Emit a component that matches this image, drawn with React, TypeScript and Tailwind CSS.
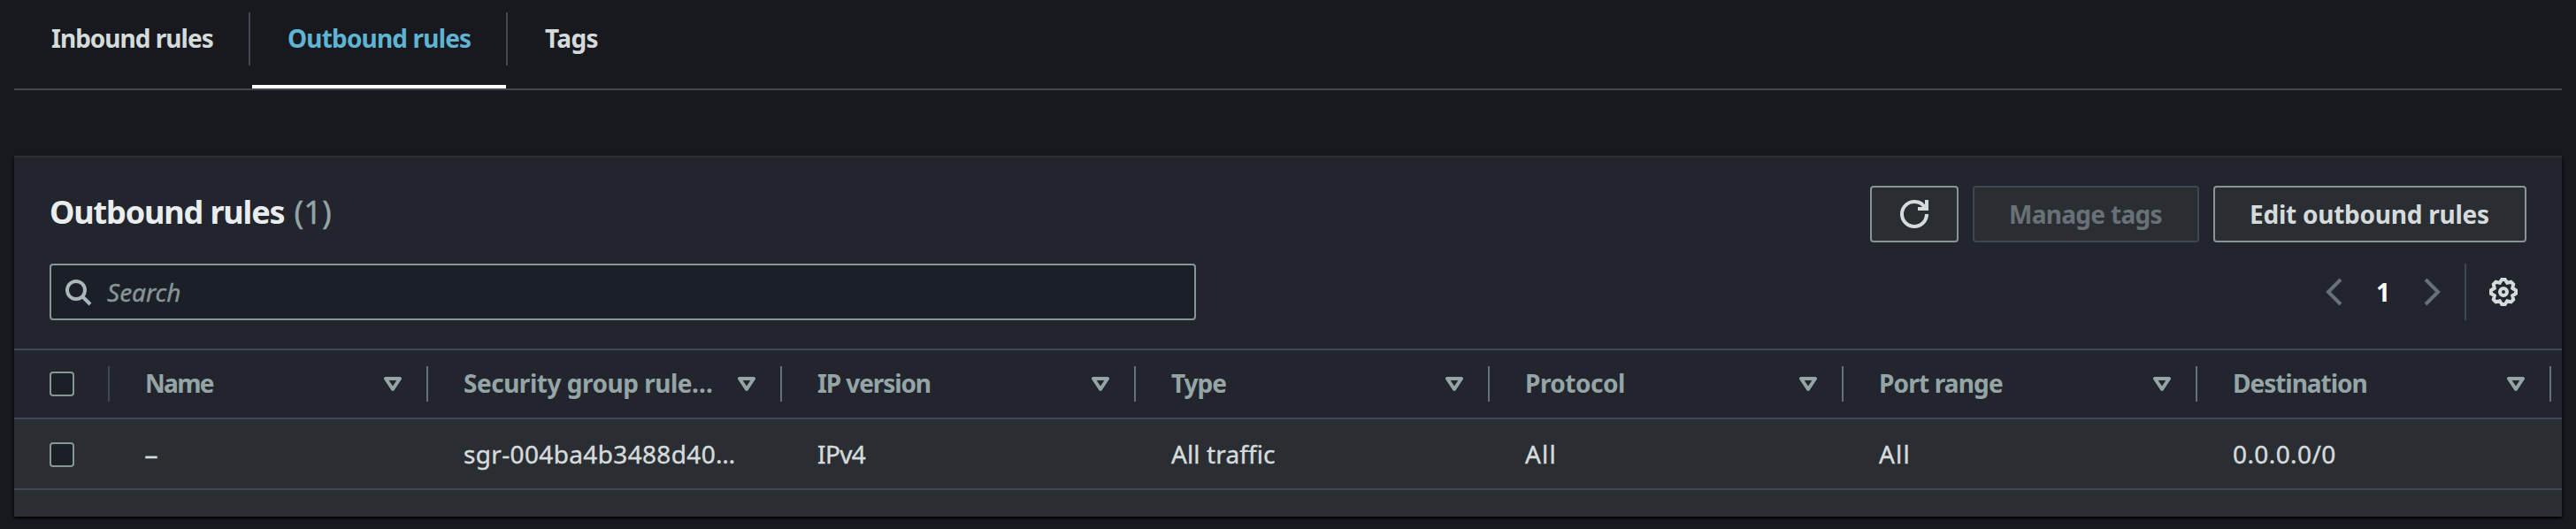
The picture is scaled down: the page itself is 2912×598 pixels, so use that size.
import React from "react";

type Column = {
  label: string;
  value: string;
  width: string;
  labelClass: string;
  valueClass: string;
};

const columns: Column[] = [
  { label: "Name", value: "–", width: "w-[360px]", labelClass: "tracking-[-1.7px]", valueClass: "tracking-normal scale-x-110" },
  { label: "Security group rule…", value: "sgr-004ba4b3488d40…", width: "w-[400px]", labelClass: "tracking-[-0.48px]", valueClass: "tracking-[0.35px]" },
  { label: "IP version", value: "IPv4", width: "w-[400px]", labelClass: "tracking-[-1.1px]", valueClass: "tracking-[-0.6px]" },
  { label: "Type", value: "All traffic", width: "w-[400px]", labelClass: "tracking-[-1.05px]", valueClass: "tracking-[0.11px]" },
  { label: "Protocol", value: "All", width: "w-[400px]", labelClass: "tracking-[-0.49px]", valueClass: "tracking-[1.2px]" },
  { label: "Port range", value: "All", width: "w-[400px]", labelClass: "tracking-[-0.83px]", valueClass: "tracking-[1.2px]" },
  { label: "Destination", value: "0.0.0.0/0", width: "w-[400px]", labelClass: "tracking-[-1.03px]", valueClass: "tracking-[0.4px]" },
];

function Icon({ className = "", children }: { className?: string; children: React.ReactNode }) {
  return (
    <svg
      viewBox="0 0 16 16"
      width="32"
      height="32"
      fill="none"
      stroke="currentColor"
      strokeWidth="2"
      className={`block shrink-0 ${className}`}
      aria-hidden="true"
    >
      {children}
    </svg>
  );
}

function Checkbox() {
  return (
    <span
      role="checkbox"
      aria-checked="false"
      className="block size-7 shrink-0 rounded-[4px] border-2 border-[#879596] bg-[#1b1f27]"
    />
  );
}

function Tabs() {
  return (
    <nav className="mx-4 flex h-[102px] shrink-0 border-b-2 border-[#414750] font-bold leading-10 text-[#d5dbdb]">
      <div className="flex w-[267px] pt-[14px]">
        <div className="flex h-[60px] w-full border-r-2 border-[#414750] pl-[42px] pt-[9px]">
          <span className="whitespace-nowrap tracking-[-0.98px]">Inbound rules</span>
        </div>
      </div>
      <div className="flex w-[291px] flex-col justify-between pt-[14px]">
        <div className="flex h-[60px] w-full border-r-2 border-[#414750] pl-[42px] pt-[9px] text-[#5fb4d4]">
          <span className="whitespace-nowrap tracking-[-0.83px]">Outbound rules</span>
        </div>
        <div className="ml-[2px] mr-[2px] h-1 bg-white" />
      </div>
      <div className="pl-[42px] pt-[23px]">
        <span className="tracking-[-0.63px]">Tags</span>
      </div>
    </nav>
  );
}

function PanelHeader() {
  return (
    <header className="flex h-[216px] shrink-0 flex-col px-10 pt-8">
      <div className="flex h-16 justify-between">
        <h2 className="pt-[5px] text-[36px] font-bold leading-[50px] text-[#eaeded]">
          <span className="tracking-[-1.14px]">Outbound rules</span>
          <span className="ml-[11px] font-normal text-[#95a5a6] [-webkit-text-stroke:0.4px]">(1)</span>
        </h2>
        <div className="flex gap-4 font-bold text-[#d5dbdb]">
          <button aria-label="Refresh" className="flex w-[100px] items-center justify-center rounded-[4px] border-2 border-[#879596] bg-[#2a2e33]">
            <Icon>
              <path d="M10 5h5V0" />
              <path d="M15 8a6.957 6.957 0 0 1-7 7 6.957 6.957 0 0 1-7-7 6.957 6.957 0 0 1 7-7 6.87 6.87 0 0 1 6.3 4" />
            </Icon>
          </button>
          <button className="flex w-64 items-center whitespace-nowrap rounded-[4px] border-2 border-[#414750] bg-[#2a2e33] pb-px pl-[39px] tracking-[-0.7px] text-[#687078]">
            Manage tags
          </button>
          <button className="flex w-[354px] items-center whitespace-nowrap rounded-[4px] border-2 border-[#879596] bg-[#2a2e33] pb-px pl-[39px] tracking-[-0.24px]">
            Edit outbound rules
          </button>
        </div>
      </div>
      <div className="mt-6 flex h-16 justify-between">
        <div className="flex w-[1296px] items-center rounded-[4px] border-2 border-[#879596] bg-[#1b1f27] pl-[14px]">
          <Icon className="text-[#aab7b8]">
            <circle cx="7" cy="7" r="5" />
            <path d="m15 15-4.5-4.5" />
          </Icon>
          <span className="ml-[17px] italic text-[#879596] [-webkit-text-stroke:0.4px]">Search</span>
        </div>
        <div className="flex items-center">
          <Icon className="text-[#687078]">
            <path d="M11 1 4 8l7 7" />
          </Icon>
          <span className="w-[76px] pb-px text-center font-bold text-white">1</span>
          <Icon className="text-[#687078]">
            <path d="m5 1 7 7-7 7" />
          </Icon>
          <div className="ml-[22px] h-16 w-[2px] bg-[#414750]" />
          <Icon className="ml-[26px] mr-[10px] text-[#d5dbdb]">
            <circle cx="8" cy="8" r="2" />
            <path d="M7.1 1h1.8l1.2 1.9 2.2-.5 1.3 1.3-.5 2.2L15 7.1v1.8l-1.9 1.2.5 2.2-1.3 1.3-2.2-.5L8.9 15H7.1l-1.2-1.9-2.200.5-1.300-1.300.5-2.200L1 8.900V7.100l1.900-1.200-.5-2.200 1.300-1.300 2.200.5z" />
          </Icon>
        </div>
      </div>
    </header>
  );
}

function RulesTable() {
  return (
    <div className="flex flex-1 flex-col leading-10">
      <div className="flex h-20 shrink-0 items-center border-y-2 border-[#414750] font-bold text-[#95a5a6]">
        <div className="flex h-10 w-[108px] items-center justify-between border-r-2 border-[#414750] pl-10">
          <Checkbox />
        </div>
        {columns.map((c) => (
          <div key={c.label} className={`flex h-10 shrink-0 items-center justify-between border-r-2 border-[#687078] pl-10 pr-[22px] ${c.width}`}>
            <span className={`whitespace-nowrap pb-[2px] ${c.labelClass}`}>{c.label}</span>
            <Icon>
              <path d="M4 5h8l-4 6z" strokeLinejoin="round" />
            </Icon>
          </div>
        ))}
      </div>
      <div className="flex h-20 shrink-0 items-center border-b-2 border-[#414750] bg-[#2a2e33] text-[#d5dbdb]">
        <div className="flex w-[108px] items-center pl-10 pt-[2px]">
          <Checkbox />
        </div>
        {columns.map((c) => (
          <div key={c.label} className={`flex shrink-0 pl-10 [-webkit-text-stroke:0.4px] ${c.width}`}>
            <span className={`whitespace-nowrap ${c.valueClass}`}>{c.value}</span>
          </div>
        ))}
      </div>
      <div className="flex-1 bg-[#2a2e33]" />
    </div>
  );
}

export default function App() {
  return (
    <main className="flex h-[598px] w-[2912px] flex-col overflow-hidden bg-[#18191e] font-['Noto_Sans','Open_Sans',sans-serif] text-[28px]">
      <Tabs />
      <section className="mx-4 mt-[74px] flex h-[408px] shrink-0 flex-col border-t-2 border-[#2a2e33] bg-[#22252d] shadow-[0_2px_2px_0_rgba(0,0,0,0.6),2px_2px_2px_0_rgba(0,0,0,0.3),-2px_2px_2px_0_rgba(0,0,0,0.3)]">
        <PanelHeader />
        <RulesTable />
      </section>
    </main>
  );
}
